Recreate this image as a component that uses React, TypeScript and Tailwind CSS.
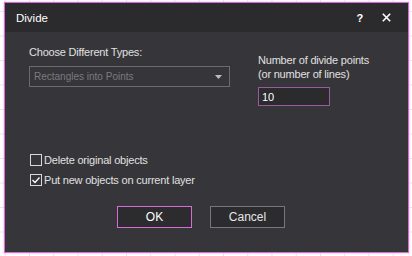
import React from "react";

export default function App() {
  return (
    <div
      className="w-[412px] h-[256px] overflow-hidden bg-white bg-[linear-gradient(to_right,#e3e8e3_1px,transparent_1px),linear-gradient(to_bottom,#e3e8e3_1px,transparent_1px)] bg-size-[24.25px_24.5px] bg-position-[4.75px_11px] pl-[4px] pt-[2px]"
      style={{ fontFamily: '"Liberation Sans", Arial, sans-serif' }}
    >
      <div className="w-[405px] h-[251px] border border-[#d46ed6] shadow-[0_0_2px_#e9a4ea] flex flex-col text-[11px] leading-[14px] tracking-[-0.2px]">
        {/* Title bar */}
        <div className="h-[29px] bg-[#2b2b2e] flex items-center pl-[11px] text-white">
          <span className="text-[11.5px] tracking-normal">Divide</span>
          <div className="ml-auto flex items-center">
            <span className="font-bold text-[11px] mr-[19px]">?</span>
            <svg width="9" height="9" viewBox="0 0 9 9" className="mr-[17px]">
              <path d="M0.8 0.8 L8.2 8.2 M8.2 0.8 L0.8 8.2" stroke="#ffffff" strokeWidth="1.6" />
            </svg>
          </div>
        </div>
        {/* Body */}
        <div className="flex-1 bg-[#36363a] px-[24px] text-[#e0e0e0]">
          <div className="flex">
            <div className="w-[201px] pt-[13px]">
              <div>Choose Different Types:</div>
              <div className="mt-[7px] h-[21px] border border-[#6b6b6e] flex items-center pl-[4px] pr-[7px] text-[#7a7a7d] text-[10px] tracking-normal">
                <span>Rectangles into Points</span>
                <svg width="7" height="4" viewBox="0 0 7 4" className="ml-auto">
                  <path d="M0 0 H7 L3.5 4 Z" fill="#bdbdbd" />
                </svg>
              </div>
            </div>
            <div className="ml-[28px] pt-[21px]">
              <div>Number of divide points</div>
              <div>(or number of lines)</div>
              <div className="mt-[6px] w-[72px] h-[19px] border border-[#9a5aa0] bg-[#2b2b2e] flex items-center pl-[3px] text-white">
                10
              </div>
            </div>
          </div>
          <div className="mt-[47px] ml-[1px] flex flex-col gap-[6px]">
            <div className="flex items-center h-[14px]">
              <div className="w-[12px] h-[12px] border border-[#d8d8d8]" />
              <span className="ml-[2px]">Delete original objects</span>
            </div>
            <div className="flex items-center h-[14px]">
              <div className="w-[12px] h-[12px] border border-[#d8d8d8] flex items-center justify-center">
                <svg width="10" height="10" viewBox="0 0 10 10">
                  <path d="M1.5 5 L4 7.5 L8.5 2.5" stroke="#ffffff" strokeWidth="1.3" fill="none" />
                </svg>
              </div>
              <span className="ml-[2px]">Put new objects on current layer</span>
            </div>
          </div>
          <div className="mt-[19px] pl-[88px] flex gap-[18px]">
            <div className="w-[75px] h-[22px] border border-[#d46ed6] bg-[#2c2c2f] flex items-center justify-center text-white text-[12px] tracking-normal">
              OK
            </div>
            <div className="w-[75px] h-[22px] border border-[#777779] bg-[#2c2c2f] flex items-center justify-center text-[#e6e6e6] text-[12px] tracking-normal">
              Cancel
            </div>
          </div>
        </div>
      </div>
    </div>
  );
}
